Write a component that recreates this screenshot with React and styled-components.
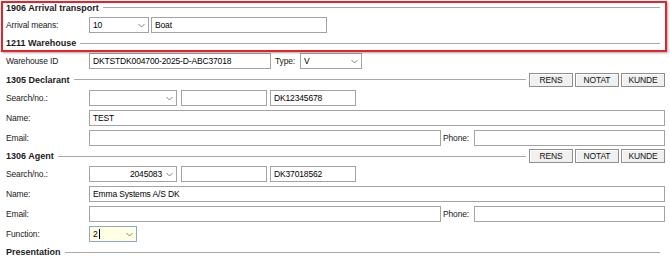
import React from 'react';
import styled, { createGlobalStyle } from 'styled-components';

const GlobalStyle = createGlobalStyle`
  html, body {
    margin: 0;
    padding: 0;
    background: #fff;
  }
  body {
    font-family: "Liberation Sans", Arial, sans-serif;
  }
`;

// styles
const Page = styled.div`
  position: relative;
  width: 670px;
  height: 256px;
  overflow: hidden;
  box-sizing: border-box;
  padding: 0 5px 0 6px;
  display: flex;
  flex-direction: column;
  font-size: 8.5px;
  letter-spacing: -0.15px;
  color: #000;
`;

const Highlight = styled.div`
  position: absolute;
  top: 1px;
  left: 1px;
  width: 666px;
  height: 51px;
  box-sizing: border-box;
  border: 2px solid #e4242a;
  box-shadow: 1px 1px 2px rgba(0, 0, 0, 0.35);
  pointer-events: none;
`;

const Header = styled.div`
  display: flex;
  align-items: center;
  height: ${p => p.$h || 16}px;
  flex-shrink: 0;
`;

const HeaderTitle = styled.span`
  font-weight: bold;
  font-size: 9px;
  letter-spacing: 0;
  white-space: nowrap;
  color: #1a1a1a;
`;

const Rule = styled.div`
  flex: 1;
  height: 0;
  border-top: 1px solid #a8a8a8;
  margin: 0 ${p => (p.$short ? 3 : 5)}px 0 4px;
`;

const Buttons = styled.div`
  display: flex;
  gap: 2px;
`;

const Button = styled.button`
  width: 44px;
  height: 14px;
  padding: 0;
  box-sizing: border-box;
  border: 1px solid #8e8e8e;
  background: #f0f0f0;
  box-shadow: inset 1px 1px 0 #fff;
  font-family: "Liberation Sans", Arial, sans-serif;
  font-size: 8.5px;
  letter-spacing: -0.15px;
  color: #111;
`;

const Row = styled.div`
  display: flex;
  align-items: center;
  height: 20px;
  flex-shrink: 0;
`;

const Label = styled.span`
  width: ${p => p.$w || 83}px;
  margin-left: ${p => p.$ml || 0}px;
  flex-shrink: 0;
  white-space: nowrap;
  color: #1a1a1a;
`;

const Field = styled.div`
  box-sizing: border-box;
  height: 16px;
  width: ${p => (p.$w ? p.$w + 'px' : 'auto')};
  flex: ${p => (p.$w ? '0 0 auto' : '1 1 auto')};
  margin-left: ${p => p.$ml || 0}px;
  border: 1px solid ${p => (p.$focus ? '#8ea7cf' : '#a3a3a3')};
  background: ${p => (p.$focus ? '#ffffe3' : '#fff')};
  display: flex;
  align-items: center;
  padding: 0 0 0 3px;
  white-space: nowrap;
  overflow: hidden;
`;

const Value = styled.span`
  flex: 1;
  text-align: ${p => (p.$right ? 'right' : 'left')};
`;

const Caret = styled.span`
  display: inline-block;
  width: 1px;
  height: 10px;
  background: #000;
  vertical-align: middle;
  margin-left: 1px;
`;

const ChevronBox = styled.span`
  width: 14px;
  flex-shrink: 0;
  display: flex;
  justify-content: center;
  align-items: center;
`;

const Chevron = () => (
  <svg width="7" height="5" viewBox="0 0 7 5">
    <polyline points="0.5,1 3.5,4 6.5,1" fill="none" stroke="#808080" strokeWidth="1" />
  </svg>
);

const Select = ({ value, right, focus, w, ml }) => (
  <Field $w={w} $ml={ml} $focus={focus}>
    <Value $right={right}>
      {value}
      {focus && <Caret />}
    </Value>
    <ChevronBox>
      <Chevron />
    </ChevronBox>
  </Field>
);

const SectionHeader = ({ title, buttons, h }) => (
  <Header $h={h}>
    <HeaderTitle>{title}</HeaderTitle>
    <Rule $short={buttons} />
    {buttons && (
      <Buttons>
        <Button>RENS</Button>
        <Button>NOTAT</Button>
        <Button>KUNDE</Button>
      </Buttons>
    )}
  </Header>
);

const Party = ({ title, search, no, name, h }) => (
  <>
    <SectionHeader title={title} buttons h={h} />
    <Row>
      <Label>Search/no.:</Label>
      <Select w={88} value={search} right />
      <Field $w={86} $ml={4} />
      <Field $w={86} $ml={3}>{no}</Field>
    </Row>
    <Row>
      <Label>Name:</Label>
      <Field>{name}</Field>
    </Row>
    <Row>
      <Label>Email:</Label>
      <Field $w={352} />
      <Label $w={31} $ml={2}>Phone:</Label>
      <Field />
    </Row>
  </>
);

// component
export default function App() {
  return (
    <Page>
      <GlobalStyle />
      <SectionHeader title="1906 Arrival transport" h={15} />
      <Row>
        <Label>Arrival means:</Label>
        <Select w={60} value="10" />
        <Field $w={176} $ml={2}>Boat</Field>
      </Row>
      <SectionHeader title="1211 Warehouse" />
      <Row>
        <Label>Warehouse ID</Label>
        <Field $w={182}>DKTSTDK004700-2025-D-ABC37018</Field>
        <Label $w={25} $ml={4}>Type:</Label>
        <Select w={62} value="V" />
      </Row>
      <Party title="1305 Declarant" search="" no="DK12345678" name="TEST" h={17} />
      <Party title="1306 Agent" search="2045083" no="DK37018562" name="Emma Systems A/S DK" />
      <Row>
        <Label>Function:</Label>
        <Select w={48} value="2" focus />
      </Row>
      <SectionHeader title="Presentation" />
      <Highlight />
    </Page>
  );
}
